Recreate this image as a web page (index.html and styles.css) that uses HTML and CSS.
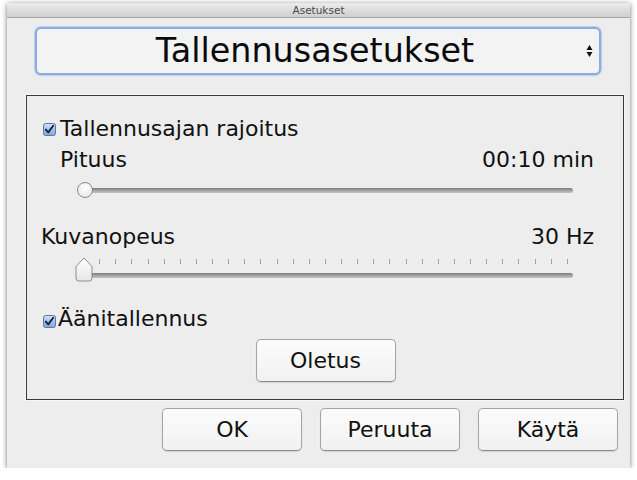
FILE: index.html
```
<!DOCTYPE html>
<html lang="fi">
<head>
<meta charset="utf-8">
<title>Asetukset</title>
<link rel="stylesheet" href="styles.css">
</head>
<body>
<div class="window">
  <div class="titlebar">Asetukset</div>
  <div class="content">
    <div class="select">
      <span class="select-text">Tallennusasetukset</span>
      <svg class="select-arrows" width="7" height="14" viewBox="0 0 7 14"><path d="M3.5 1 L6.5 6 H0.5 Z" fill="#111"/><path d="M0.5 8 H6.5 L3.5 13 Z" fill="#111"/></svg>
    </div>
    <div class="group">
      <div class="row check-row r1">
        <span class="checkbox"><svg width="13" height="13" viewBox="0 0 13 13"><defs><linearGradient id="cb1" x1="0" y1="0" x2="0" y2="1"><stop offset="0" stop-color="#cfe0f7"/><stop offset="1" stop-color="#7fa4dc"/></linearGradient></defs><rect x="0.5" y="0.5" width="12" height="12" rx="2" fill="url(#cb1)" stroke="#5a78a8"/><path d="M2.8 6.6 L5.3 9.4 L10.2 2.8" fill="none" stroke="#15233b" stroke-width="1.9" stroke-linecap="round" stroke-linejoin="round"/></svg></span>
        <span class="label">Tallennusajan rajoitus</span>
      </div>
      <div class="row value-row r2"><span>Pituus</span><span>00:10 min</span></div>
      <div class="slider slider-round">
        <div class="track"></div>
        <div class="knob-round"></div>
      </div>
      <div class="row value-row r3"><span>Kuvanopeus</span><span>30 Hz</span></div>
      <div class="slider slider-ticked">
        <div class="ticks">
          <i></i><i></i><i></i><i></i><i></i><i></i><i></i><i></i><i></i><i></i><i></i><i></i><i></i><i></i><i></i><i></i><i></i><i></i><i></i><i></i><i></i><i></i><i></i><i></i><i></i><i></i><i></i><i></i><i></i><i></i><i></i>
        </div>
        <div class="track"></div>
        <svg class="knob-pointer" width="18" height="25" viewBox="0 0 18 25"><defs><linearGradient id="kn" x1="0" y1="0" x2="0" y2="1"><stop offset="0" stop-color="#ffffff"/><stop offset="1" stop-color="#e6e6e6"/></linearGradient></defs><path d="M9 1 L17 9.5 V21 Q17 24 14 24 H4 Q1 24 1 21 V9.5 Z" fill="url(#kn)" stroke="#8c8c8c"/></svg>
      </div>
      <div class="row check-row r4">
        <span class="checkbox"><svg width="13" height="13" viewBox="0 0 13 13"><defs><linearGradient id="cb2" x1="0" y1="0" x2="0" y2="1"><stop offset="0" stop-color="#cfe0f7"/><stop offset="1" stop-color="#7fa4dc"/></linearGradient></defs><rect x="0.5" y="0.5" width="12" height="12" rx="2" fill="url(#cb2)" stroke="#5a78a8"/><path d="M2.8 6.6 L5.3 9.4 L10.2 2.8" fill="none" stroke="#15233b" stroke-width="1.9" stroke-linecap="round" stroke-linejoin="round"/></svg></span>
        <span class="label">Äänitallennus</span>
      </div>
      <div class="default-row"><button class="btn">Oletus</button></div>
    </div>
    <div class="actions">
      <button class="btn">OK</button>
      <button class="btn">Peruuta</button>
      <button class="btn">Käytä</button>
    </div>
  </div>
</div>
</body>
</html>
```
FILE: styles.css
```
html, body {
  margin: 0;
  padding: 0;
  background: #ffffff;
}

body {
  font-family: "DejaVu Sans", "Liberation Sans", sans-serif;
  color: #111;
}

.window {
  margin: 3px 0 0 7px;
  width: 623px;
  background: #ededed;
  box-shadow: 0 1px 5px rgba(0, 0, 0, 0.55);
}

.titlebar {
  height: 14px;
  line-height: 14px;
  text-align: center;
  font-size: 10.5px;
  color: #4a4a4a;
  background: linear-gradient(#ececec, #cfcfcf);
  border-bottom: 1px solid #a6a6a6;
}

.content {
  padding: 9px 0 17px 0;
}

.select {
  position: relative;
  margin-left: 28px;
  width: 562px;
  height: 44px;
  border: 2px solid #8cacde;
  border-radius: 6px;
  background: #f3f3f3;
  box-shadow: 0 0 1px 1px #b7cced;
  display: flex;
  align-items: center;
  justify-content: center;
}

.select-text {
  font-size: 33.4px;
  line-height: 44px;
  padding-right: 6px;
  color: #0a0a0a;
}

.select-arrows {
  position: absolute;
  right: 6px;
  top: 15px;
}

.group {
  margin: 20px 0 0 19px;
  width: 551px;
  border: 1px solid #3a3a3a;
  box-shadow: 0 0 0 1px #f8f8f8;
  padding: 20px 29px 17px 16px;
}

.row {
  height: 26px;
  line-height: 26px;
  font-size: 22px;
  display: flex;
  align-items: center;
}

.check-row .checkbox {
  width: 13px;
  height: 13px;
  display: block;
  margin-right: 4px;
}

.check-row .checkbox svg {
  display: block;
}

.value-row {
  justify-content: space-between;
}

.r2 {
  margin-top: 5px;
  margin-left: 17px;
}

.r3 {
  margin-top: 17px;
  margin-left: -2px;
}

.r4 {
  margin-top: 20px;
}

.r4 .checkbox {
  margin-top: 4px;
  margin-right: 2px;
}

.slider {
  position: relative;
  display: flow-root;
}

.track {
  height: 5px;
  border-radius: 3px;
  background: linear-gradient(#7c7c7c, #a9a9a9 60%, #c4c4c4);
}

.slider-round {
  margin-left: 34px;
  width: 496px;
  height: 34px;
}

.slider-round .track {
  margin: 15px 0 0 8px;
}

.knob-round {
  position: absolute;
  left: 0;
  top: 9px;
  width: 14px;
  height: 14px;
  border: 1px solid #8a8a8a;
  border-radius: 50%;
  background: radial-gradient(circle at 50% 35%, #ffffff, #ececec 70%, #dcdcdc);
}

.slider-ticked {
  margin-top: 4px;
  margin-left: 32px;
  width: 498px;
  height: 32px;
}

.ticks {
  margin: 5px 0 0 8px;
  width: 485px;
  height: 5px;
  display: flex;
  justify-content: space-between;
}

.ticks i {
  display: block;
  width: 1px;
  height: 5px;
  background: #a2a2a2;
}

.slider-ticked .track {
  margin: 9px 0 0 9px;
}

.knob-pointer {
  position: absolute;
  left: 0;
  top: 3px;
}

.default-row {
  margin-top: 7px;
  display: flex;
  justify-content: center;
}

.btn {
  width: 140px;
  height: 43px;
  padding: 0;
  margin: 0;
  font-family: "DejaVu Sans", "Liberation Sans", sans-serif;
  font-size: 22px;
  line-height: 41px;
  color: #111;
  border: 1px solid #a3a3a3;
  border-bottom-color: #8c8c8c;
  border-radius: 5px;
  background: linear-gradient(#fcfcfc, #f1f1f1);
  box-shadow: 0 1px 1px rgba(0, 0, 0, 0.12);
}

.default-row .btn {
  margin-left: 14px;
}

.actions {
  margin-top: 8px;
  display: flex;
  justify-content: flex-end;
  gap: 18px;
  padding-right: 12px;
}
```
